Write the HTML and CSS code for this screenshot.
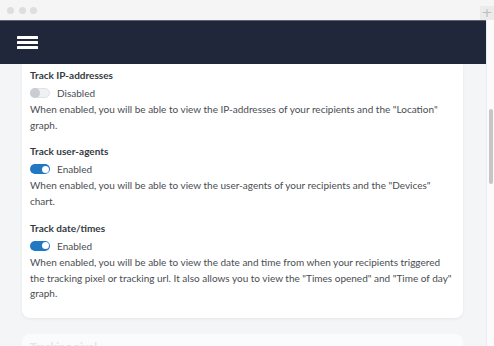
FILE: index.html
```html
<!DOCTYPE html>
<html lang="en">
<head>
<meta charset="utf-8">
<title>Tracking settings</title>
<link rel="stylesheet" href="styles.css">
</head>
<body>
<div class="window">
  <div class="titlebar">
    <span class="dot"></span><span class="dot"></span><span class="dot"></span>
    <span class="newtab">+</span>
  </div>
  <div class="viewport">
    <div class="page">
      <header class="topbar">
        <button class="burger" aria-label="Menu"><span></span><span></span><span></span></button>
      </header>
      <main class="content">
        <section class="card">
          <div class="setting">
            <h3 class="setting-title">Track IP-addresses</h3>
            <div class="toggle-row"><span class="toggle off"><span class="knob"></span></span><span class="toggle-label">Disabled</span></div>
            <p class="setting-desc">When enabled, you will be able to view the IP-addresses of your recipients and the "Location" graph.</p>
          </div>
          <div class="setting">
            <h3 class="setting-title">Track user-agents</h3>
            <div class="toggle-row"><span class="toggle on"><span class="knob"></span></span><span class="toggle-label">Enabled</span></div>
            <p class="setting-desc">When enabled, you will be able to view the user-agents of your recipients and the "Devices" chart.</p>
          </div>
          <div class="setting">
            <h3 class="setting-title">Track date/times</h3>
            <div class="toggle-row"><span class="toggle on"><span class="knob"></span></span><span class="toggle-label">Enabled</span></div>
            <p class="setting-desc">When enabled, you will be able to view the date and time from when your recipients triggered the tracking pixel or tracking url. It also allows you to view the "Times opened" and "Time of day" graph.</p>
          </div>
        </section>
        <section class="card faded">
          <h3 class="setting-title">Tracking pixel</h3>
          <svg class="chev" width="8" height="8" viewBox="0 0 8 8"><path d="M1 5.5 L4 2.5 L7 5.5" fill="none" stroke="#dcdee2" stroke-width="1.2"/></svg>
        </section>
      </main>
    </div>
    <div class="scrollbar"><div class="thumb"></div></div>
  </div>
</div>
</body>
</html>
```

FILE: styles.css
```css
* { box-sizing: border-box; }
html, body { margin: 0; padding: 0; }
body {
  width: 494px;
  height: 346px;
  overflow: hidden;
  font-family: Lato, "Open Sans", sans-serif;
  background: #f4f5f7;
}
.window {
  display: flex;
  flex-direction: column;
  height: 346px;
}
.titlebar {
  height: 20px;
  flex: none;
  background: #f5f5f5;
  display: flex;
  align-items: center;
  padding-left: 7px;
  gap: 4.5px;
}
.dot {
  width: 7px;
  height: 7px;
  border-radius: 50%;
  background: #dedede;
}
.newtab {
  margin-left: auto;
  align-self: flex-end;
  width: 14px;
  height: 14px;
  background: #ebebeb;
  color: #bdbdbd;
  font: 13px/14px "DejaVu Sans", sans-serif;
  text-align: center;
}
.viewport {
  flex: 1;
  display: flex;
  min-height: 0;
}
.page {
  flex: 1;
  display: flex;
  flex-direction: column;
  min-width: 0;
  overflow: hidden;
}
.topbar {
  height: 44px;
  flex: none;
  background: #20273b;
  border-top: 1px solid #5d6270;
  display: flex;
  align-items: center;
  padding-left: 17px;
}
.burger {
  border: 0;
  padding: 0;
  background: none;
  display: flex;
  flex-direction: column;
  gap: 2px;
  width: 21px;
}
.burger span {
  display: block;
  height: 3px;
  background: #fff;
  border-radius: 0.5px;
}
.content {
  padding: 0 23px 0 22px;
  display: flex;
  flex-direction: column;
  gap: 16px;
}
.card {
  background: #fff;
  border-radius: 0 0 8px 8px;
  box-shadow: 0 1px 3px rgba(30, 40, 60, 0.07);
  padding: 3px 6px 16px 8px;
}
.setting + .setting { margin-top: 10px; }
.setting-title {
  margin: 0;
  font-size: 10px;
  line-height: 16px;
  font-weight: 700;
  color: #353a42;
}
.toggle-row {
  margin-top: 1px;
  height: 18px;
  display: flex;
  align-items: center;
  gap: 7px;
}
.toggle {
  width: 20px;
  height: 10px;
  border-radius: 5px;
  display: flex;
  align-items: center;
  padding: 1.5px;
}
.toggle.on {
  background: #2277c3;
  justify-content: flex-end;
}
.toggle.on .knob {
  width: 7px;
  height: 7px;
  border-radius: 50%;
  background: #fff;
}
.toggle.off {
  background: #f0f1f3;
  border: 1px solid #e0e2e5;
  padding: 0;
}
.toggle.off .knob {
  width: 10px;
  height: 10px;
  margin-left: -1px;
  border-radius: 50%;
  background: #c9ccd1;
}
.toggle-label {
  font-size: 10px;
  color: #4a4d52;
}
.setting-desc {
  margin: 0;
  font-size: 10px;
  line-height: 15.7px;
  color: #4a4d52;
}
.card.faded {
  border-radius: 8px;
  background: #fafbfc;
  padding: 5px 8px 20px 8px;
  display: flex;
  align-items: flex-start;
  justify-content: space-between;
  box-shadow: none;
}
.card.faded .setting-title {
  color: #e2e4e7;
  font-size: 11px;
}
.chev { margin-top: 7px; margin-right: 3px; }
.scrollbar {
  width: 8px;
  flex: none;
  background: #fbfbfb;
  border-left: 1px solid #ececee;
  padding: 89px 1px 0 1.5px;
}
.thumb {
  height: 75px;
  border-radius: 3px;
  background: #c6c6c6;
}
```
